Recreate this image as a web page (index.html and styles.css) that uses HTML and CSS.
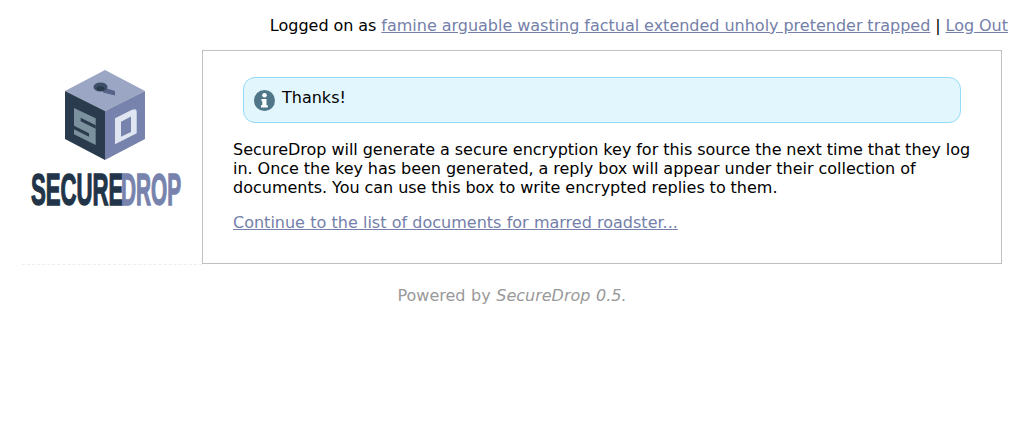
FILE: index.html
```html
<!DOCTYPE html>
<html lang="en">
<head>
<meta charset="utf-8">
<title>SecureDrop</title>
<link rel="stylesheet" href="styles.css">
</head>
<body>
<div class="user-bar">Logged on as <a href="#">famine arguable wasting factual extended unholy pretender trapped</a> | <a href="#">Log Out</a></div>
<div class="layout">
  <aside class="sidebar">
    <svg class="logo" width="152" height="138" viewBox="0 0 152 138" aria-label="SecureDrop">
      <polygon points="75,0 115,21 75,41 35,21" fill="#9ba5c4"/>
      <polygon points="35,21 75,41 75,90 35,69" fill="#2a3b4d"/>
      <polygon points="75,41 115,21 115,69 75,90" fill="#7783ac"/>
      <path d="M72,17 L85,21 V25.5 L73,22.5 Z" fill="#55638a"/>
      <ellipse cx="70.5" cy="17" rx="7" ry="4.6" fill="#3d4f66"/>
      <ellipse cx="70.5" cy="18.6" rx="4" ry="2.4" fill="#2a3b4d"/>
      <polygon points="44,38 65.7,48.3 65.7,75 44,64.3" fill="#7b919d"/>
      <polygon points="50.7,47.7 65.7,55.2 65.7,58.7 50.7,51.2" fill="#2a3b4d"/>
      <polygon points="44,55.7 59,63.2 59,66.7 44,59.2" fill="#2a3b4d"/>
      <path fill-rule="evenodd" d="M85,48.3 L102,39.8 Q106.7,37.8 106.7,42 V63.3 L85,74.3 Z M91,51.7 V66.7 L101,62 V46.5 Z" fill="#e0e5f2"/>
      <text class="mark" transform="translate(1 134.5) scale(0.498 1)">SECURE</text>
      <text class="mark mark-drop" transform="translate(91 134.5) scale(0.467 1)">DROP</text>
    </svg>
  </aside>
  <main class="panel">
    <div class="flash">
      <svg class="flash-icon" width="21" height="21" viewBox="0 0 21 21" aria-hidden="true">
        <circle cx="10.5" cy="10.5" r="10.5" fill="#4f7689"/>
        <circle cx="10.5" cy="5.2" r="2.3" fill="#fff"/>
        <path d="M7.5,9 h5 v6.3 h1.3 v2.2 h-6.8 v-2.2 h1.3 v-4.1 h-0.8 z" fill="#fff"/>
      </svg>
      <span>Thanks!</span>
    </div>
    <p class="message">SecureDrop will generate a secure encryption key for this source the next time that they log in. Once the key has been generated, a reply box will appear under their collection of documents. You can use this box to write encrypted replies to them.</p>
    <p class="continue"><a href="#">Continue to the list of documents for marred roadster...</a></p>
  </main>
</div>
<footer class="footer">Powered by <em>SecureDrop 0.5.</em></footer>
</body>
</html>
```

FILE: styles.css
```css
html, body {
  margin: 0;
  padding: 0;
}
body {
  background: #fff;
  color: #000;
  font-family: "DejaVu Sans", sans-serif;
  font-size: 16px;
  line-height: 19px;
}
a {
  color: #7480a9;
  text-decoration: underline;
}
.user-bar {
  height: 50px;
  box-sizing: border-box;
  padding: 16px 16px 0 0;
  text-align: right;
  word-spacing: -0.2px;
}
.layout {
  display: flex;
  width: 980px;
  margin-left: 22px;
}
.sidebar {
  width: 180px;
  flex: none;
  box-sizing: border-box;
  padding: 20px 0 0 8px;
  border-bottom: 1px dashed #eee;
}
.logo {
  display: block;
  overflow: visible;
}
.mark {
  font-family: "Liberation Sans", sans-serif;
  font-weight: 700;
  font-size: 44.5px;
  fill: #213448;
  stroke: #213448;
  stroke-width: 1.4;
}
.mark-drop {
  fill: #7783ac;
  stroke: #7783ac;
}
.panel {
  flex: 1;
  box-sizing: border-box;
  height: 214px;
  margin-bottom: 1px;
  padding: 26px 30px 0;
  border: 1px solid #c0c0c0;
}
.flash {
  display: flex;
  align-items: flex-start;
  gap: 7px;
  height: 46px;
  box-sizing: border-box;
  margin: 0 10px;
  padding: 10px;
  background: #e2f6fd;
  border: 1px solid #94dcf5;
  border-radius: 12px;
}
.flash-icon {
  flex: none;
  margin-top: 2px;
}
.message {
  margin: 17px 0 0;
  word-spacing: -0.2px;
}
.continue {
  margin: 16px 0 0;
  word-spacing: 0.15px;
}
.footer {
  margin-top: 21px;
  text-align: center;
  color: #999;
  word-spacing: 0.5px;
}
```
